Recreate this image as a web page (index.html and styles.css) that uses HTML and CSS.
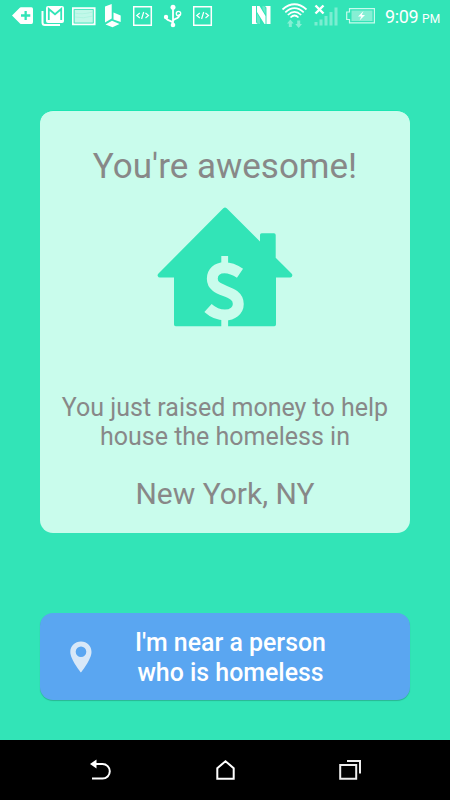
FILE: index.html
```
<!DOCTYPE html>
<html lang="en">
<head>
<meta charset="utf-8">
<title>You're awesome!</title>
<link rel="stylesheet" href="styles.css">
</head>
<body>
<div class="screen">
  <header class="status">
    <div class="notifications">
      <svg width="22" height="34" viewBox="12 0 22 34"><path fill="#fff" fill-rule="evenodd" d="M12 15.5 19.500 8Q20 7.300 21 7.300H31.500Q33 7.300 33 9V22Q33 24 31.500 24H21Q20 24 19.500 23ZM24.500 11V14.300H21V16.700H24.500V20H26.800V16.700H30.300V14.300H26.800V11Z"/></svg>
      <svg width="24" height="34" viewBox="41 0 24 34" fill="none"><path stroke="#fff" stroke-width="2" d="M42.500 11V22.500Q42.500 25 45 25H60"/><rect x="46" y="6" width="18" height="17" rx="2" fill="#fff"/><path stroke="#32e4b7" stroke-width="1.800" d="M48.800 20V9L55 14.300 61.200 9V20"/></svg>
      <svg width="25" height="34" viewBox="71 0 25 34"><path fill="#c2f8e9" d="M72 8H94V24H72Z"/><path fill="none" stroke="#fff" stroke-width="1.500" d="M71.700 8H93.800V24.500H71.700Z"/><path fill="none" stroke="#32e4b7" stroke-width=".8" d="M73.200 9.500H92.300V23H73.200Z"/><path fill="none" stroke="#a2f1dc" stroke-width=".6" d="M74 13Q80 15 92 12M74 17Q82 19 92 16"/></svg>
      <svg width="18" height="34" viewBox="104 0 18 34"><path fill="#fff" d="M105 6.500 111.700 4V18.500L105 22.500ZM113.500 12.500 120.700 15.500V22L113.500 19.500ZM105.500 24.500 112 20.700 119.500 24 112.500 27.200Z"/></svg>
      <svg class="code" width="20" height="34" viewBox="133 0 20 34" fill="none" stroke="#fff"><path stroke-width="1.500" d="M133.700 6.700H151.300V25.200H133.700Z"/><path stroke-width="1.200" d="M139.800 13 136.800 15.500 139.800 18M143.700 12 141.600 19M145.500 13 148.500 15.500 145.500 18"/></svg>
      <svg class="usb" width="20" height="34" viewBox="163 0 20 34" fill="none" stroke="#fff" stroke-width="1.800"><path d="M173 8V25M173 23C172 20 166 21 166 17.500M173 21C174 17.500 179.500 20 179.500 14"/><circle cx="173" cy="7.300" r="2.500" fill="#fff" stroke="none"/><circle cx="173" cy="25" r="2.300" fill="#fff" stroke="none"/><circle cx="166" cy="17" r="2.200" fill="#fff" stroke="none"/><circle cx="178.500" cy="13.500" r="2.200" stroke-width="1.300"/></svg>
      <svg width="20" height="34" viewBox="193 0 20 34" fill="none" stroke="#fff"><path stroke-width="1.500" d="M193.700 6.700H211.300V25.200H193.700Z"/><path stroke-width="1.200" d="M199.800 13 196.800 15.500 199.800 18M203.700 12 201.600 19M205.500 13 208.500 15.500 205.500 18"/></svg>
    </div>
    <div class="system">
      <svg class="nfc" width="19" height="34" viewBox="252 0 19 34"><path fill="#fff" d="M252 6H256V22Q256 23.500 258 24H252ZM270.500 24H266.500V8Q266.500 6.500 264.500 6H270.500ZM257 6H259.500L265.500 16V24H264.500L257 12Z"/><path fill="#fff" d="M257 13.500 260 18.500V24H259Q257 23.500 257 21ZM262.500 6H263.500Q265.500 6.500 265.500 9V14L262.500 9Z" opacity=".25"/></svg>
      <svg class="wifi" width="27" height="34" viewBox="281 0 27 34"><path fill="none" stroke="#fff" stroke-width="1.700" d="M282.500 9.500Q294.500 -1 306.500 9.500M285.300 12.300Q294.500 4 303.700 12.300M287.800 15Q294.500 8.800 301.200 15M290.500 17.500Q294.500 13.500 298.500 17.500"/><path fill="#86efd4" d="M290.300 19.500 293.700 23.500H291.800V27H288.800V23.500H287ZM298.700 28 295.300 24H297.200V20.500H300.200V24H302Z"/></svg>
      <svg class="signal" width="25" height="34" viewBox="314 0 25 34"><path fill="#7bedd1" d="M314.500 22H317.500V25.500H314.500ZM319.500 19.500H322.500V25.500H319.500ZM324.500 16H327.500V25.500H324.500ZM329.500 12H332.500V25.500H329.500ZM334.500 7.500H337.500V25.500H334.500Z"/><path stroke="#fff" stroke-width="2.400" d="M315.500 5.500 323.500 13.500M323.500 5.500 315.500 13.500"/></svg>
      <svg class="battery" width="30" height="34" viewBox="346 0 30 34"><path fill="none" stroke="#c8fbed" stroke-width="1.200" d="M349.500 8.600H374.400V22.800H349.500V19.500H346.700V12H349.500Z"/><path fill="#86efd4" d="M351.500 10.500H372.500V21H351.500Z"/><path fill="#fff" d="M363.500 11 358 16.500H361.300L359.500 20.500 365 15H361.800Z"/></svg>
      <div class="time"><span>9:09</span><small>PM</small></div>
    </div>
  </header>
  <main>
    <section class="card">
      <h1>You're awesome!</h1>
      <svg class="house" width="136" height="120" viewBox="157 207 136 120">
        <path fill="#32e4b7" d="M223.300 208.300Q225 206.800 226.700 208.300L260 241.500V235Q260 233.300 261.700 233.300H274Q275.700 233.300 275.700 235V257.700L291.500 273.500Q293 275 291.800 276.800 291.200 277.500 290 277.500H276V324.500Q276 326.200 274.300 326.200H175.700Q174 326.200 174 324.500V277.500H160Q158.300 277.500 157.700 276 157.200 274.700 158.500 273.500Z"/>
        <path class="dollar" stroke-width="10.900" d="M240 273.200C234.500 269.500 229.500 267.700 224.500 267.700 217 267.700 212.300 272.300 212.300 278.700 212.300 293.500 238.300 288.500 238.300 304 238.300 310.500 232.500 315 225 315 218.500 315 213 312.500 208 308"/>
        <path class="dollar" stroke-width="6.800" d="M224.700 256V265M224.700 317V327"/>
      </svg>
      <p>You just raised money to help<br>house the homeless in</p>
      <h2>New York, NY</h2>
    </section>
    <button class="near" type="button">
      <svg class="pin" width="22" height="32" viewBox="0 0 22 32"><path fill="#d8e8f8" fill-rule="evenodd" d="M11 0.500C5 .5.300 5 .3 11 .3 18.500 11 31.500 11 31.500S21.500 18.500 21.500 11C21.500 5 17 .5 11 .5ZM11 5.500A5.300 5.300 0 1 1 11 16.100 5.300 5.300 0 1 1 11 5.500Z"/></svg>
      <span>I'm near a person<br>who is homeless</span>
    </button>
  </main>
  <nav class="navbar">
    <svg width="24" height="24" viewBox="89 758 24 24"><path fill="none" stroke="#fff" stroke-width="2" d="M95 764H102.500A7.300 7.300 0 0 1 102.500 778.600H92"/><path fill="#fff" d="M90 764 96.500 759.500V768.500Z"/></svg>
    <svg width="24" height="24" viewBox="213.500 758 24 24"><path fill="none" stroke="#fff" stroke-width="2" d="M216.800 778.800V768.200L225 761.200 233.200 768.200V778.800Z"/></svg>
    <svg width="24" height="24" viewBox="338 758 24 24"><path fill="none" stroke="#eee" stroke-width="2" d="M340.200 765H356.200V778.800H340.200ZM347 761H360V773.500"/></svg>
  </nav>
</div>
</body>
</html>
```
FILE: styles.css
```
* { box-sizing: border-box; }
body { margin: 0; font-family: Roboto, "Liberation Sans", sans-serif; }
svg { display: block; flex: none; }
.screen { width: 450px; height: 800px; background: #32e4b7; display: flex; flex-direction: column; overflow: hidden; }
.status { height: 34px; flex: none; display: flex; justify-content: space-between; padding: 0 10px 0 12px; color: #fff; }
.notifications { display: flex; gap: 7px; }
.code { margin-left: 4px; }
.usb { margin: 0 3px; }
.system { display: flex; }
.wifi { margin-left: 10px; }
.signal { margin-left: 6px; }
.battery { margin-left: 7px; }
.time { margin-left: 9px; width: 55px; display: flex; align-items: baseline; gap: 4px; font-size: 18px; line-height: 34px; white-space: nowrap; }
.time span { letter-spacing: -.4px; }
.time small { font-size: 12px; }
main { flex: 1; padding: 76px 40px 0; }
.card { height: 423px; border-radius: 13px; background: #c9fcec; color: #888; display: flex; flex-direction: column; align-items: center; border-top: 1px solid #1be5b2; text-align: center; }
h1, h2, p { margin: 0; font-weight: 400; white-space: nowrap; }
h1 { font-size: 35px; line-height: 44px; margin-top: 34px; }
.house { margin-top: 18px; }
.dollar { fill: none; stroke: #c9fcec; }
.card p { margin-top: 66px; font-size: 25px; line-height: 29px; }
h2 { font-size: 30px; line-height: 36px; margin-top: 25px; }
.near { margin-top: 80px; width: 370px; height: 87px; border: 0; border-radius: 13px; padding: 0 0 0 30px; display: flex; align-items: center; background: #5aa6f1; color: #fff; font: 500 24.9px/29.500px Roboto, sans-serif; box-shadow: 0 1px 1px #0003; }
.near span { margin-left: 43px; width: 191px; padding-top: 2px; text-align: center; white-space: nowrap; display: flex; justify-content: center; }
.navbar { height: 60px; flex: none; background: #000; display: flex; justify-content: space-between; padding: 18px 88px 0 89px; }
```
